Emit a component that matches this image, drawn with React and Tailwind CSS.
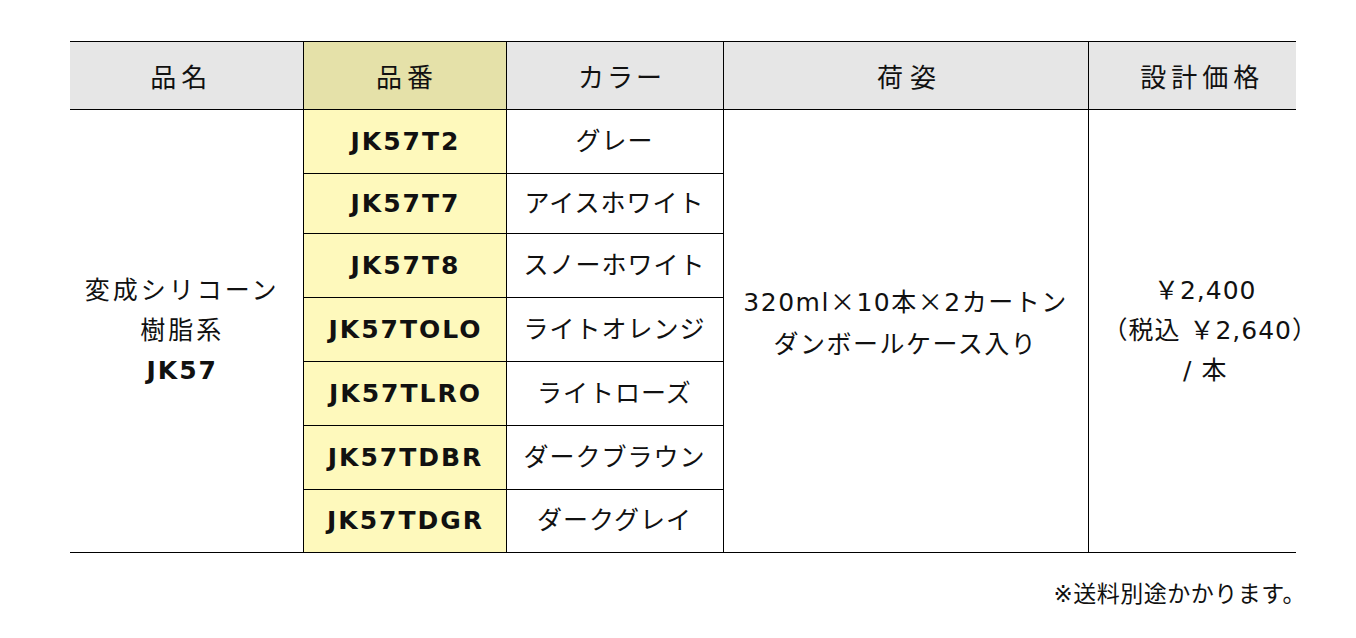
import React from 'react';

const rows = [
  { code: 'JK57T2', color: 'グレー', h: 'h-[64px]' },
  { code: 'JK57T7', color: 'アイスホワイト', h: 'h-[60px]' },
  { code: 'JK57T8', color: 'スノーホワイト', h: 'h-[64px]' },
  { code: 'JK57TOLO', color: 'ライトオレンジ', h: 'h-[64px]' },
  { code: 'JK57TLRO', color: 'ライトローズ', h: 'h-[64px]' },
  { code: 'JK57TDBR', color: 'ダークブラウン', h: 'h-[64px]' },
  { code: 'JK57TDGR', color: 'ダークグレイ', h: 'h-[63px]' },
];

const font = "font-['DejaVu_Sans','Noto_Sans_CJK_JP',sans-serif]";
const cjk = "font-['Noto_Sans_CJK_JP',sans-serif]";

const App = () => {
  return (
    <div className={`w-[1356px] h-[638px] bg-white text-[#111] ${font} pt-[41px] pl-[70px] pr-[60px]`}>
      <table className="w-[1226px] table-fixed border-collapse">
        <colgroup>
          <col className="w-[233px]" />
          <col className="w-[203px]" />
          <col className="w-[217px]" />
          <col className="w-[365px]" />
          <col className="w-[208px]" />
        </colgroup>

        {/* Header */}
        <thead>
          <tr className="h-[68px] text-[26px] border-t border-b border-black">
            <th className="font-normal pt-[5px] bg-[#e6e6e6] border-r border-black tracking-[5px] pr-[10px]">品名</th>
            <th className="font-normal pt-[5px] bg-[#e5e1a9] border-r border-black tracking-[5px] pl-[5px]">品番</th>
            <th className="font-normal pt-[5px] bg-[#e6e6e6] border-r border-black tracking-[3px] pl-[14px]">カラー</th>
            <th className="font-normal pt-[5px] bg-[#e6e6e6] border-r border-black tracking-[7px] pl-[9px]">荷姿</th>
            <th className="font-normal pt-[5px] bg-[#e6e6e6] tracking-[5px] pl-[20px]">設計価格</th>
          </tr>
        </thead>

        {/* Body */}
        <tbody>
          {rows.map((r, i) => (
            <tr key={r.code} className={r.h}>
              {i === 0 && (
                <td rowSpan={7} className="text-center align-middle border-r border-b border-black text-[25px] leading-[40px] tracking-[3px] pr-[8px]">
                  <div>変成シリコーン</div>
                  <div>樹脂系</div>
                  <div className="font-bold tracking-[2px]">JK57</div>
                </td>
              )}
              <td className="bg-[#fef9bc] text-center align-middle border border-black font-bold text-[25px] tracking-[2px] pl-[2px]">
                {r.code}
              </td>
              <td className="text-center align-middle border border-black text-[25px] tracking-[1px] whitespace-nowrap">
                {r.color}
              </td>
              {i === 0 && (
                <td rowSpan={7} className="text-center align-middle border-r border-b border-black text-[25px] leading-[42px] whitespace-nowrap tracking-[1.5px] pb-[18px]">
                  <div>
                    320ml<span className={cjk}>×</span>10本<span className={cjk}>×</span>2カートン
                  </div>
                  <div>ダンボールケース入り</div>
                </td>
              )}
              {i === 0 && (
                <td rowSpan={7} className="text-center align-middle border-b border-black text-[25px] leading-[40px] whitespace-nowrap tracking-[1px]">
                  <div className="ml-[26px]">￥2,400</div>
                  <div className="ml-[14px] -mr-[14px]">（税込 ￥2,640）</div>
                  <div className="ml-[26px]">/ 本</div>
                </td>
              )}
            </tr>
          ))}
        </tbody>
      </table>

      <p className="text-right text-[23px] tracking-[0.5px] mt-[24px] -mr-[10px]">※送料別途かかります。</p>
    </div>
  );
};

export default App;
